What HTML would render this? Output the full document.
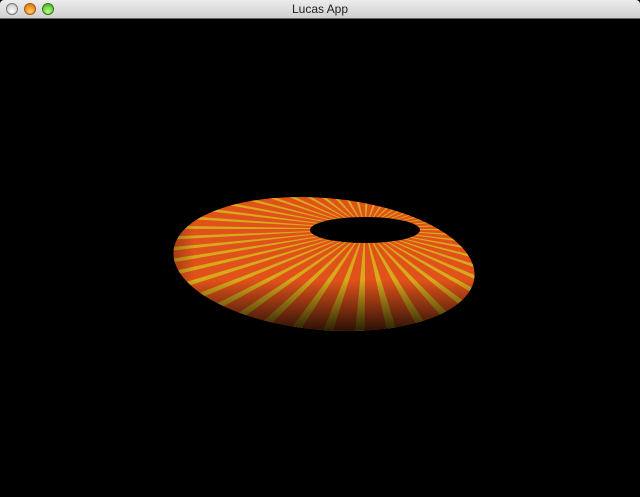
<!DOCTYPE html>
<html><head><style>
html,body{margin:0;padding:0;width:640px;height:497px;overflow:hidden;background:#000;}
.tb{position:absolute;left:0;top:0;width:640px;height:18px;background:linear-gradient(#ececec,#d0d0d0);border-bottom:1px solid #666;border-radius:4px 4px 0 0;}
.tb span{position:absolute;left:0;right:0;top:2px;text-align:center;font:12px "Liberation Sans",sans-serif;color:#222;}
.b{position:absolute;top:3px;width:12px;height:12px;border-radius:50%;box-sizing:border-box;border:1px solid #777;}
</style></head><body>
<div class="tb">
<div class="b" style="left:6px;background:radial-gradient(circle at 50% 70%,#fff,#bbb)"></div>
<div class="b" style="left:24px;background:radial-gradient(circle at 50% 75%,#fc6,#d60);border-color:#a50"></div>
<div class="b" style="left:42px;background:radial-gradient(circle at 50% 75%,#bf8,#3a2);border-color:#370"></div>
<span>Lucas App</span></div>
<svg width="640" height="497" style="position:absolute;left:0;top:0" viewBox="0 0 640 497">
<defs>
<clipPath id="c"><ellipse cx="324" cy="264" rx="151" ry="66" transform="rotate(5 324 264)"/></clipPath>
<linearGradient id="g" x1="0" y1="0" x2="0" y2="1">
<stop offset="0" stop-color="#000" stop-opacity="0"/>
<stop offset="0.6" stop-color="#000" stop-opacity="0"/>
<stop offset="1" stop-color="#000" stop-opacity="0.95"/>
</linearGradient>
<linearGradient id="gl" x1="0" y1="0" x2="1" y2="0">
<stop offset="0" stop-color="#000" stop-opacity="0.3"/>
<stop offset="0.08" stop-color="#000" stop-opacity="0"/>
</linearGradient>
</defs>
<g clip-path="url(#c)">
<rect x="170" y="190" width="310" height="150" fill="#e0521a"/>
<g transform="translate(365 229) scale(1 0.42)">
<circle cx="0" cy="0" r="200" fill="none" stroke="#d6b81c" stroke-width="400" stroke-dasharray="8 18.18" opacity="0.85"/>
</g>
<rect x="170" y="190" width="310" height="150" fill="url(#g)"/>
<rect x="170" y="190" width="310" height="150" fill="url(#gl)"/>
</g>
<ellipse cx="365" cy="230" rx="55" ry="13" fill="#000"/>
</svg>
</body></html>
